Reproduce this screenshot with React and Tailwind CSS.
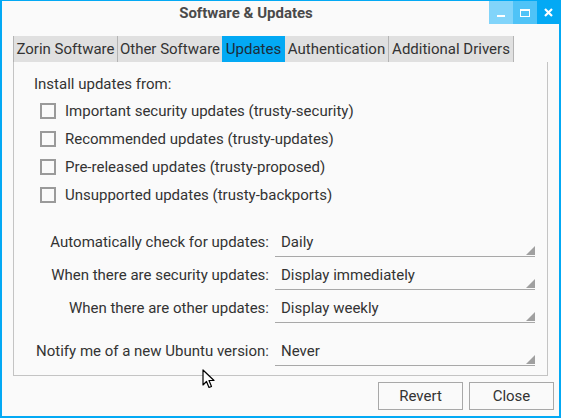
import React from "react";

const tabs = [
  { name: "Zorin Software", w: "w-[103px]" },
  { name: "Other Software", w: "w-[105px]" },
  { name: "Updates", w: "w-[63px]", active: true },
  { name: "Authentication", w: "w-[103px]" },
  { name: "Additional Drivers", w: "w-[125px]" },
];

const sources = [
  "Important security updates (trusty-security)",
  "Recommended updates (trusty-updates)",
  "Pre-released updates (trusty-proposed)",
  "Unsupported updates (trusty-backports)",
];

const options = [
  { label: "Automatically check for updates:", value: "Daily" },
  { label: "When there are security updates:", value: "Display immediately" },
  { label: "When there are other updates:", value: "Display weekly" },
];

function Combo({ label, value, className = "" }) {
  return (
    <div className={`flex items-center h-[33px] ${className}`}>
      <div className="w-[256px] text-right pr-[1px] whitespace-nowrap">{label}</div>
      <div className="relative ml-[5px] w-[260px] h-[29px] border-b border-[#a8a8a8] flex items-center pl-[6px]">
        {value}
        <svg className="absolute right-0 bottom-[1px]" width="9" height="9" viewBox="0 0 9 9">
          <polygon points="9,0 9,9 0,9" fill="#a0a0a0" />
        </svg>
      </div>
    </div>
  );
}

export default function App() {
  return (
    <div
      className="relative w-[561px] h-[418px] bg-[#fafafa] border-2 border-t border-[#03a9f4] text-[15px] text-[#333333] overflow-hidden"
      style={{ fontFamily: "Roboto, 'Liberation Sans', sans-serif" }}
    >
      {/* Title bar */}
      <div className="flex h-[23px] items-center">
        <div className="flex-1 text-center font-bold text-[15px] text-[#4a4a4a] pl-[1px] pt-[2px]">
          Software &amp; Updates
        </div>
        <div className="flex h-full">
          <button className="w-[24px] h-full bg-[#81d4fa] flex items-center justify-center">
            <span className="block w-[8px] h-[2px] bg-white mt-[6px]" />
          </button>
          <button className="w-[24px] h-full bg-[#4fc3f7] flex items-center justify-center">
            <span className="block w-[10px] h-[8px] border border-t-2 border-white" />
          </button>
          <button className="w-[22px] h-full bg-[#03a9f4] flex items-center justify-center">
            <svg width="9" height="9" viewBox="0 0 9 9">
              <path d="M1 1 L8 8 M8 1 L1 8" stroke="white" strokeWidth="2.2" />
            </svg>
          </button>
        </div>
      </div>

      <div className="pl-[11px] pt-[12px]">
        {/* Tabs */}
        <div className="flex h-[26px] w-fit border-l border-r border-[#b4b4b4] bg-[#e0e0e0]">
          {tabs.map((t, i) => (
            <div
              key={t.name}
              className={`flex items-center justify-center whitespace-nowrap ${t.w} ${
                t.active ? "bg-[#03a9f4] text-[#1c2c3a]" : "text-[#333333]"
              } ${i > 0 && !t.active && !tabs[i - 1].active ? "border-l border-[#b4b4b4]" : ""}`}
            >
              {t.name}
            </div>
          ))}
        </div>

        {/* Panel */}
        <div className="w-[535px] h-[314px] border border-t-0 border-[#c4c4c4] bg-[#fafafa] pt-[12px]">
          <div className="pl-[20px] leading-[20px]">Install updates from:</div>
          <div className="mt-[3px]">
            {sources.map((s) => (
              <div key={s} className="flex items-center h-[28px] pl-[26px]">
                <span className="block w-[16px] h-[16px] border-2 border-[#9a9a9a] bg-[#fafafa]" />
                <span className="ml-[9px]">{s}</span>
              </div>
            ))}
          </div>
          <div className="mt-[17px]">
            {options.map((o) => (
              <Combo key={o.label} label={o.label} value={o.value} />
            ))}
            <Combo className="mt-[10px]" label="Notify me of a new Ubuntu version:" value="Never" />
          </div>
        </div>
      </div>

      {/* Buttons */}
      <div className="flex justify-end gap-[6px] mt-[6px] pr-[5px]">
        <button className="w-[85px] h-[28px] border border-[#a8a8a8] bg-[#fafafa] text-[#333333]">
          Revert
        </button>
        <button className="w-[85px] h-[28px] border border-[#a8a8a8] bg-[#fafafa] text-[#333333]">
          Close
        </button>
      </div>

      {/* Mouse pointer */}
      <svg className="absolute left-[200px] top-[368px]" width="14" height="21" viewBox="0 0 14 21">
        <path d="M1 1 L1 16 L4.5 12.5 L7 18.5 L9.5 17.5 L7 11.5 L12 11.5 Z" fill="white" stroke="black" strokeWidth="1.2" strokeLinejoin="round" />
      </svg>
    </div>
  );
}
